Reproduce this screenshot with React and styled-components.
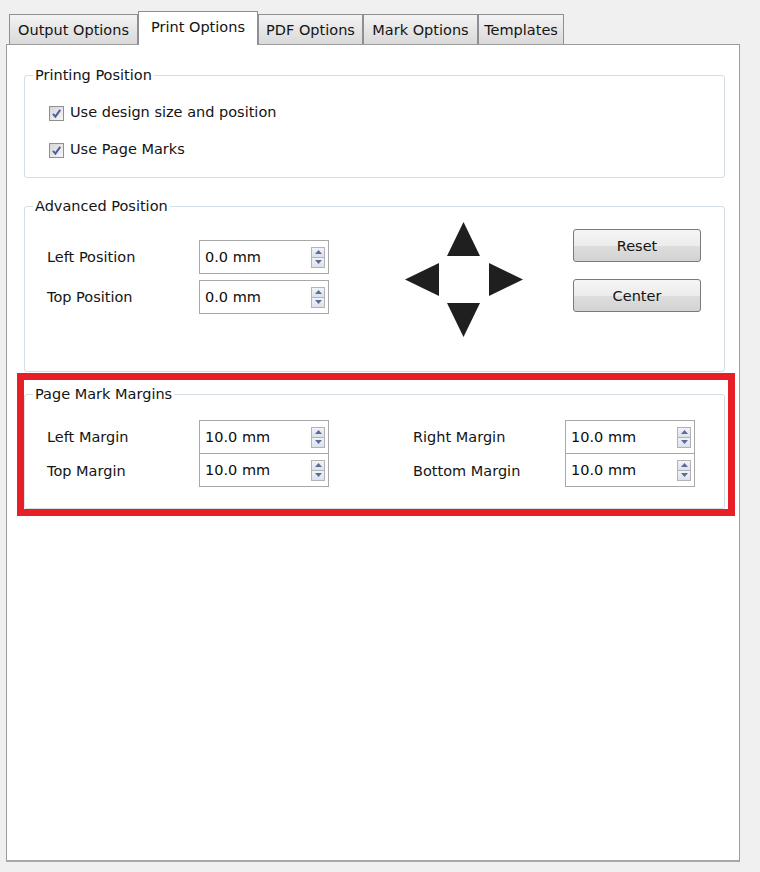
import React from "react";
import styled, { createGlobalStyle } from "styled-components";

const GlobalStyle = createGlobalStyle`
  html, body { margin: 0; background: #f0f0f0; }
  body {
    font-family: "DejaVu Sans", Verdana, sans-serif;
    font-size: 14.5px;
    color: #141414;
  }
`;

const Window = styled.div`
  padding: 11px 0 0 6px;
`;

const TabRow = styled.div`
  display: flex;
  align-items: flex-end;
  padding-left: 3px;
  position: relative;
  z-index: 1;
  margin-bottom: -1px;
`;

const Tab = styled.div`
  width: ${(p) => p.$w}px;
  height: ${(p) => (p.$active ? 34 : 30)}px;
  margin-bottom: ${(p) => (p.$active ? 0 : 1)}px;
  box-sizing: border-box;
  border: 1px solid #8d8f94;
  border-bottom: none;
  background: ${(p) =>
    p.$active ? "#ffffff" : "linear-gradient(#f3f3f3, #e6e6e6 50%, #dadada)"};
  display: flex;
  align-items: center;
  justify-content: center;
  padding-bottom: ${(p) => (p.$active ? 4 : 0)}px;
  white-space: nowrap;
`;

const Panel = styled.div`
  width: 734px;
  height: 818px;
  box-sizing: border-box;
  border: 1px solid #9c9c9c;
  border-bottom: 2px solid #a8a8a8;
  background: #ffffff;
  padding: 21px 14px 0 17px;
`;

const Group = styled.fieldset`
  margin: 0 0 ${(p) => p.$mb || 0}px 0;
  padding: 0;
  min-width: 0;
  border: 1px solid #d3dde3;
  border-radius: 3px;
`;

const Legend = styled.legend`
  margin-left: 8px;
  padding: 0 2px;
  line-height: 18px;
`;

const CheckList = styled.div`
  display: flex;
  flex-direction: column;
  gap: 17px;
  padding: 18px 0 18px 24px;
`;

const CheckRow = styled.label`
  display: flex;
  align-items: center;
  gap: 6px;
  height: 20px;
`;

const CheckBox = styled.span`
  width: 15px;
  height: 15px;
  margin-top: 2px;
  box-sizing: border-box;
  border: 1px solid #8e8f8f;
  background: linear-gradient(135deg, #d6d6d6, #f6f6f6);
  display: flex;
  align-items: center;
  justify-content: center;
`;

const PositionRow = styled.div`
  display: flex;
  align-items: flex-start;
  padding: 7px 0 33px 22px;
`;

const FieldGrid = styled.div`
  display: grid;
  grid-template-columns: 152px 130px;
  grid-auto-rows: 34px;
  row-gap: ${(p) => p.$gap}px;
  margin-top: ${(p) => p.$top || 0}px;
`;

const FieldLabel = styled.span`
  align-self: center;
  white-space: nowrap;
`;

const SpinBox = styled.div`
  width: 130px;
  height: 34px;
  box-sizing: border-box;
  border: 1px solid #a8a8a8;
  background: #fff;
  display: flex;
  align-items: center;
  padding-left: 5px;
  margin-top: ${(p) => (p.$joined ? -1 : 0)}px;
  color: #0c0c0c;
`;

const Spinner = styled.div`
  margin-left: auto;
  margin-right: 3px;
  display: flex;
  flex-direction: column;
`;

const SpinButton = styled.span`
  width: 14px;
  height: 11px;
  box-sizing: border-box;
  border: 1px solid #b1b3b8;
  background: linear-gradient(#f1f3f8, #dde1eb);
  display: flex;
  align-items: center;
  justify-content: center;
  & + & {
    margin-top: -1px;
  }
`;

const ArrowPad = styled.svg`
  margin-left: 76px;
  flex: none;
`;

const ButtonColumn = styled.div`
  display: flex;
  flex-direction: column;
  gap: 17px;
  margin-left: 49px;
  margin-top: 7px;
`;

const Button = styled.button`
  width: 128px;
  height: 33px;
  box-sizing: border-box;
  border: 1px solid #7a7a7a;
  border-radius: 3px;
  background: linear-gradient(#f5f5f5 0%, #ececec 50%, #dedede 52%, #d2d2d2 100%);
  font: inherit;
  color: #141414;
  padding: 0;
`;

const Highlight = styled.div`
  position: relative;
  &::after {
    content: "";
    position: absolute;
    top: -12px;
    left: -7px;
    right: -10px;
    bottom: -7px;
    border: 7px solid #e81f27;
    pointer-events: none;
  }
`;

const MarginRow = styled.div`
  display: flex;
  gap: 84px;
  padding: 17px 0 20px 22px;
`;

const Check = () => (
  <CheckBox>
    <svg width="11" height="11" viewBox="0 0 11 11">
      <path d="M2 5.8 L4.4 8.6 L9.2 1.8" fill="none" stroke="#4a5f9c" strokeWidth="2" />
    </svg>
  </CheckBox>
);

const Spin = ({ value, joined }) => (
  <SpinBox $joined={joined}>
    {value}
    <Spinner>
      <SpinButton>
        <svg width="7" height="4" viewBox="0 0 7 4">
          <polygon points="3.5,0 7,4 0,4" fill="#5d6b98" />
        </svg>
      </SpinButton>
      <SpinButton>
        <svg width="7" height="4" viewBox="0 0 7 4">
          <polygon points="0,0 7,0 3.5,4" fill="#5d6b98" />
        </svg>
      </SpinButton>
    </Spinner>
  </SpinBox>
);

const tabs = [
  { label: "Output Options", w: 129 },
  { label: "Print Options", w: 120, active: true },
  { label: "PDF Options", w: 105 },
  { label: "Mark Options", w: 115 },
  { label: "Templates", w: 86 },
];

export default function App() {
  return (
    <>
      <GlobalStyle />
      <Window>
        <TabRow>
          {tabs.map((t) => (
            <Tab key={t.label} $w={t.w} $active={t.active}>
              {t.label}
            </Tab>
          ))}
        </TabRow>
        <Panel>
          <Group $mb={19}>
            <Legend>Printing Position</Legend>
            <CheckList>
              <CheckRow>
                <Check />
                Use design size and position
              </CheckRow>
              <CheckRow>
                <Check />
                Use Page Marks
              </CheckRow>
            </CheckList>
          </Group>

          <Group $mb={13}>
            <Legend>Advanced Position</Legend>
            <PositionRow>
              <FieldGrid $gap={6} $top={18}>
                <FieldLabel>Left Position</FieldLabel>
                <Spin value="0.0 mm" />
                <FieldLabel>Top Position</FieldLabel>
                <Spin value="0.0 mm" />
              </FieldGrid>
              <ArrowPad width="119" height="116" viewBox="0 0 119 116">
                <polygon points="58.5,0 75,34 42,34" fill="#1f1f1f" />
                <polygon points="0,57.5 34,41 34,74" fill="#1f1f1f" />
                <polygon points="118,57.5 84,41 84,74" fill="#1f1f1f" />
                <polygon points="42,81 75,81 58.5,115" fill="#1f1f1f" />
              </ArrowPad>
              <ButtonColumn>
                <Button>Reset</Button>
                <Button>Center</Button>
              </ButtonColumn>
            </PositionRow>
          </Group>

          <Highlight>
            <Group>
              <Legend>Page Mark Margins</Legend>
              <MarginRow>
                <FieldGrid $gap={0}>
                  <FieldLabel>Left Margin</FieldLabel>
                  <Spin value="10.0 mm" />
                  <FieldLabel>Top Margin</FieldLabel>
                  <Spin value="10.0 mm" joined />
                </FieldGrid>
                <FieldGrid $gap={0}>
                  <FieldLabel>Right Margin</FieldLabel>
                  <Spin value="10.0 mm" />
                  <FieldLabel>Bottom Margin</FieldLabel>
                  <Spin value="10.0 mm" joined />
                </FieldGrid>
              </MarginRow>
            </Group>
          </Highlight>
        </Panel>
      </Window>
    </>
  );
}
